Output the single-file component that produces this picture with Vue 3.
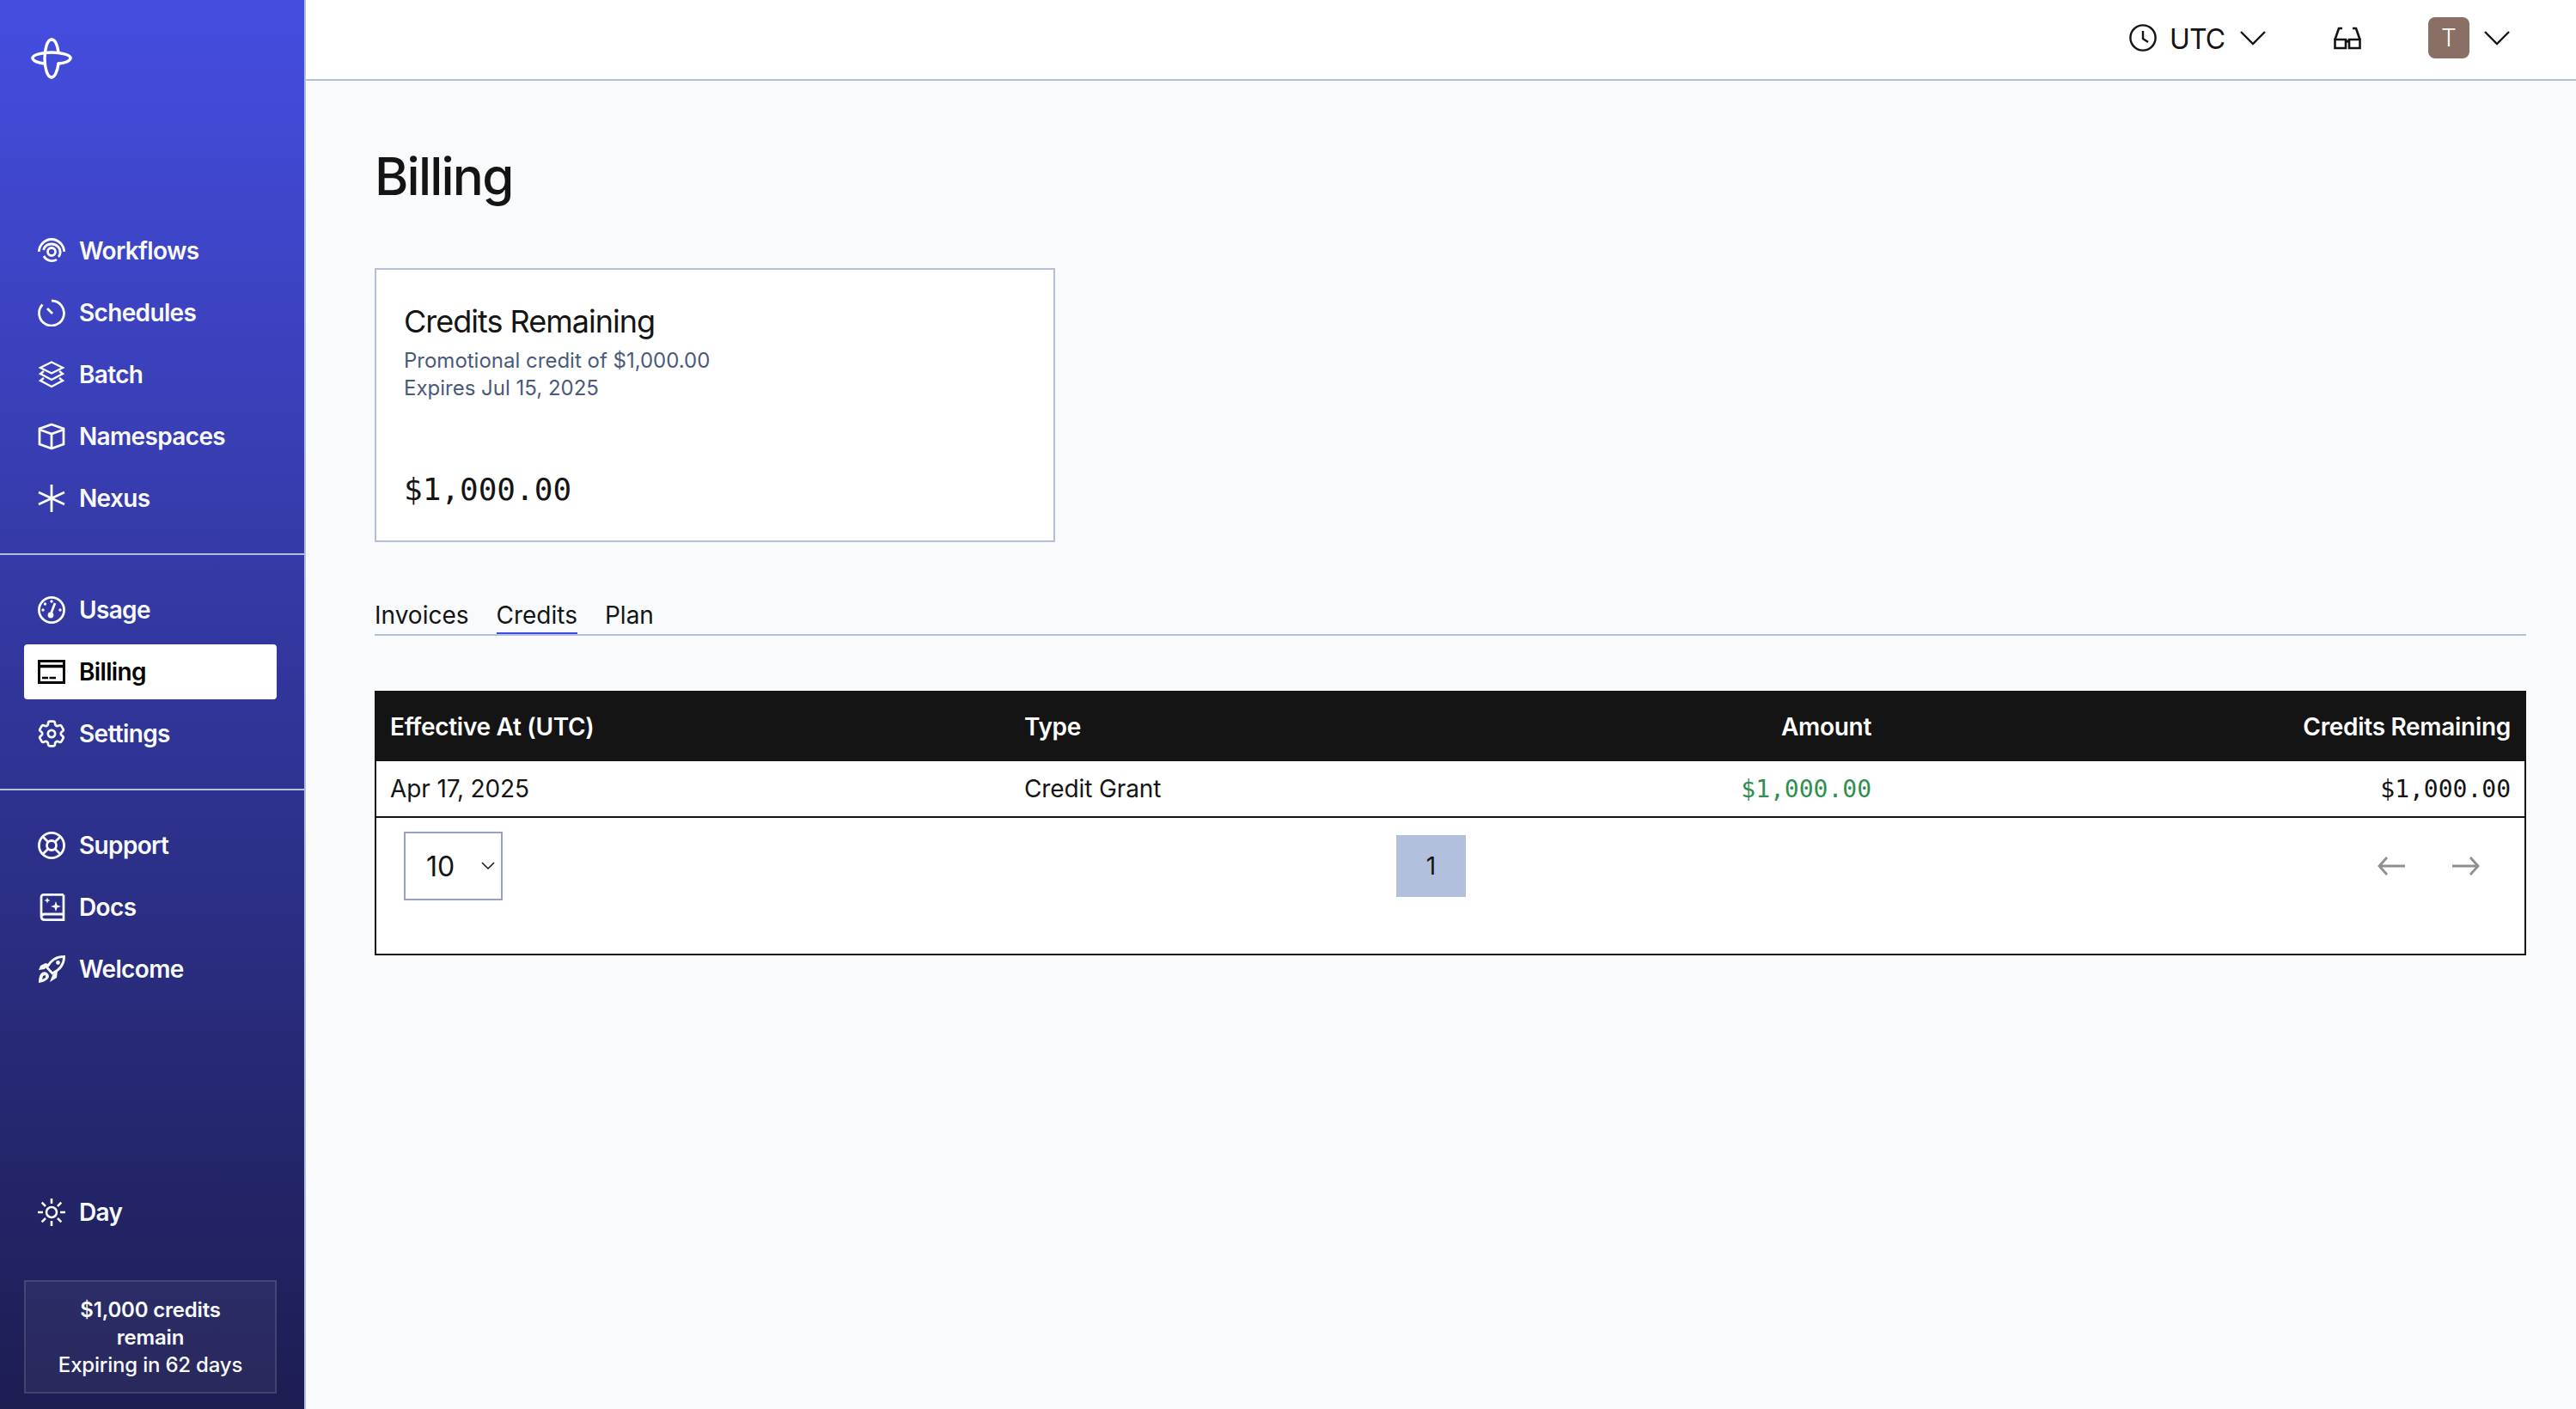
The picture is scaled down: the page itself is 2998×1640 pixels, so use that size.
<script setup>
const topNav = [
  { label: 'Workflows', icon: 'workflows' },
  { label: 'Schedules', icon: 'schedules' },
  { label: 'Batch', icon: 'batch' },
  { label: 'Namespaces', icon: 'namespaces' },
  { label: 'Nexus', icon: 'nexus' },
]
const midNav = [
  { label: 'Usage', icon: 'usage' },
  { label: 'Billing', icon: 'billing', active: true },
  { label: 'Settings', icon: 'settings' },
]
const lowNav = [
  { label: 'Support', icon: 'support' },
  { label: 'Docs', icon: 'docs' },
  { label: 'Welcome', icon: 'welcome' },
]
const groups = [topNav, midNav, lowNav]
const tabs = ['Invoices', 'Credits', 'Plan']
</script>

<template>
  <div class="app">
    <aside class="sidebar">
      <div class="logo">
        <svg width="48" height="48" viewBox="0 0 48 48" fill="none" stroke="#fff" stroke-width="3.4" stroke-linecap="round">
          <path d="M24 2C19 2 16 13 16 24C16 35 19 46 24 46" />
          <path d="M24 2C29 2 31 10 32 17" />
          <path d="M24 46C28 46 31 38 32 30" />
          <path d="M2 23.5C2 20 13 17 24 17C35 17 46 20 46 23.5" />
          <path d="M2 23.5C2 27 9 29.5 16 30" />
          <path d="M46 23.5C46 27 39 30 32 30" />
        </svg>
      </div>
      <nav v-for="(group, gi) in groups" :key="gi" class="group" :class="{ last: gi === 2 }">
        <a v-for="item in group" :key="item.label" class="item" :class="{ active: item.active }">
          <svg class="icon" width="32" height="32" viewBox="0 0 32 32" fill="none" stroke="currentColor" stroke-width="2.8">
            <template v-if="item.icon === 'workflows'">
              <path d="M1.2 17C2 8 9 2.5 16 2.5S30 8 30.8 17" />
              <path d="M6.5 15C8 10 12 8 16 8C22 8 27 13 26 19C25.6 21 25 22 24 23" />
              <path d="M7 22C10 28 18 29 22 26" />
              <circle cx="16" cy="17" r="4.5" />
            </template>
            <template v-else-if="item.icon === 'schedules'">
              <path d="M16 2A14.5 14.5 0 1 1 5.5 6.5" />
              <path d="M11 11L17 17" />
            </template>
            <template v-else-if="item.icon === 'batch'">
              <path d="M16 1.5L29 8L16 14.5L3 8Z" stroke-width="2.4" />
              <path d="M7 12L3 15L16 22L29 15L25 12" stroke-width="2.4" />
              <path d="M7 20L3 23L16 30L29 23L25 20" stroke-width="2.4" />
            </template>
            <template v-else-if="item.icon === 'namespaces'">
              <path d="M16 2L30 7V25L16 30L2 25V7Z" />
              <path d="M2 8L16 13L30 8M16 13V30" />
            </template>
            <template v-else-if="item.icon === 'nexus'">
              <path d="M16 0V32M1 9L31 23M1 23L31 9" />
            </template>
            <template v-else-if="item.icon === 'usage'">
              <circle cx="16" cy="16" r="14.6" />
              <path d="M15 21L20 8" />
              <circle cx="15" cy="22" r="3.4" fill="currentColor" stroke="none" />
              <circle cx="16" cy="6" r="1.7" fill="currentColor" stroke="none" />
              <circle cx="8.5" cy="9" r="1.7" fill="currentColor" stroke="none" />
              <circle cx="6" cy="16" r="1.7" fill="currentColor" stroke="none" />
              <circle cx="26" cy="16" r="1.7" fill="currentColor" stroke="none" />
            </template>
            <template v-else-if="item.icon === 'billing'">
              <rect x="1.5" y="3.5" width="29" height="25" stroke-width="3" />
              <path d="M2 9.5H30" stroke-width="3.5" />
              <path d="M5 23H12M13.5 23H21" stroke-width="2.6" />
            </template>
            <template v-else-if="item.icon === 'settings'">
              <svg x="0" y="0" width="32" height="32" viewBox="2 2 20 20" stroke-width="1.7">
                <path d="M9.594 3.94c.09-.542.56-.94 1.11-.94h2.593c.55 0 1.02.398 1.11.94l.213 1.281c.063.374.313.686.645.87.074.04.147.083.22.127.325.196.72.257 1.075.124l1.217-.456a1.125 1.125 0 0 1 1.37.49l1.296 2.247a1.125 1.125 0 0 1-.26 1.431l-1.003.827c-.293.241-.438.613-.43.992a7.723 7.723 0 0 1 0 .255c-.008.378.137.75.43.991l1.004.827c.424.35.534.955.26 1.43l-1.298 2.247a1.125 1.125 0 0 1-1.369.491l-1.217-.456c-.355-.133-.75-.072-1.076.124a6.47 6.47 0 0 1-.22.128c-.331.183-.581.495-.644.869l-.213 1.281c-.09.543-.56.94-1.11.94h-2.594c-.55 0-1.019-.398-1.11-.94l-.213-1.281c-.062-.374-.312-.686-.644-.87a6.52 6.52 0 0 1-.22-.127c-.325-.196-.72-.257-1.076-.124l-1.217.456a1.125 1.125 0 0 1-1.369-.49l-1.297-2.247a1.125 1.125 0 0 1 .26-1.431l1.004-.827c.292-.24.437-.613.43-.991a6.932 6.932 0 0 1 0-.255c.007-.38-.138-.751-.43-.992l-1.004-.827a1.125 1.125 0 0 1-.26-1.43l1.297-2.247a1.125 1.125 0 0 1 1.37-.491l1.216.456c.356.133.751.072 1.076-.124.072-.044.146-.086.22-.128.332-.183.582-.495.644-.869l.214-1.28Z" />
                <circle cx="12" cy="12" r="2.6" />
              </svg>
            </template>
            <template v-else-if="item.icon === 'support'">
              <circle cx="16" cy="16" r="14.6" />
              <circle cx="16" cy="16" r="5.5" />
              <path d="M5.5 5.5L12 12M26.5 5.5L20 12M5.5 26.5L12 20M26.5 26.5L20 20" />
            </template>
            <template v-else-if="item.icon === 'docs'">
              <path d="M30 1.4H7A3 3 0 0 0 4 4V27A4 4 0 0 0 8 30.6H30V24H8A4 4 0 0 0 4 27M30 1.4V24" />
              <path d="M21 9L22.5 13.5L27 15L22.5 16.5L21 21L19.5 16.5L15 15L19.5 13.5Z" fill="currentColor" stroke="none" />
              <path d="M11 4.5L12 7L14.5 8L12 9L11 11.5L10 9L7.5 8L10 7Z" fill="currentColor" stroke="none" />
            </template>
            <template v-else-if="item.icon === 'welcome'">
              <path d="M30.6 1.4C22 1.4 15 6 10.5 14L17 21C25 17 30.6 10 30.6 1.4Z" />
              <circle cx="23.5" cy="8.5" r="2.4" fill="currentColor" stroke="none" />
              <path d="M9 9L3 12L1 17L8 16L12 10Z" fill="currentColor" stroke="none" />
              <path d="M17 23L23 18L22 26L14 31Z" fill="currentColor" stroke="none" />
              <path fill-rule="evenodd" d="M5 20C9 18 13 21 13 25C12 28 8 31 1 32C1 27 2 22 5 20ZM6 24L5 28L9 26L9 23Z" fill="currentColor" stroke="none" />
            </template>
          </svg>
          <span>{{ item.label }}</span>
        </a>
      </nav>
      <div class="spacer"></div>
      <a class="item day">
        <svg class="icon" width="32" height="32" viewBox="0 0 32 32" fill="none" stroke="currentColor" stroke-width="2.6">
          <circle cx="16" cy="16" r="6" />
          <path d="M16 0V6M16 26V32M0 16H6M26 16H32M4.7 4.7L9 9M23 23L27.3 27.3M4.7 27.3L9 23M23 9L27.3 4.7" />
        </svg>
        <span>Day</span>
      </a>
      <div class="credit">
        <strong>$1,000 credits remain</strong>
        <span>Expiring in 62 days</span>
      </div>
    </aside>

    <div class="right">
      <header class="topbar">
        <svg width="32" height="32" viewBox="0 0 32 32" fill="none" stroke="#141414" stroke-width="2.4">
          <circle cx="16" cy="16" r="14.6" />
          <path d="M16 8V17L22 21" />
        </svg>
        <span class="utc">UTC</span>
        <svg class="chev" width="32" height="32" viewBox="0 0 32 32" fill="none" stroke="#141414" stroke-width="2.4">
          <path d="M2 9L16 23L30 9" />
        </svg>
        <svg class="glasses" width="32" height="32" viewBox="0 0 32 32" fill="none" stroke="#141414" stroke-width="2.6">
          <path d="M1.5 18L6 5H10M30.5 18L26 5H22" />
          <path d="M1.5 18H14V28H1.5ZM18 18H30.5V28H18ZM14 21Q16 19 18 21" />
        </svg>
        <div class="avatar">T</div>
        <svg class="chev2" width="32" height="32" viewBox="0 0 32 32" fill="none" stroke="#141414" stroke-width="2.4">
          <path d="M2 9L16 23L30 9" />
        </svg>
      </header>

      <main class="main">
        <h1>Billing</h1>

        <section class="card">
          <h2>Credits Remaining</h2>
          <p>Promotional credit of $1,000.00</p>
          <p>Expires Jul 15, 2025</p>
          <div class="balance">$1,000.00</div>
        </section>

        <div class="tabs">
          <a v-for="t in tabs" :key="t" class="tab" :class="{ current: t === 'Credits' }">{{ t }}</a>
        </div>

        <section class="table">
          <div class="row head">
            <div>Effective At (UTC)</div>
            <div>Type</div>
            <div class="num">Amount</div>
            <div class="num">Credits Remaining</div>
          </div>
          <div class="row body">
            <div class="txt">Apr 17, 2025</div>
            <div class="type txt">Credit Grant</div>
            <div class="num mono green">$1,000.00</div>
            <div class="num mono end">$1,000.00</div>
          </div>
          <div class="foot">
            <div class="select">
              <span>10</span>
              <svg width="16" height="10" viewBox="0 0 16 10" fill="none" stroke="#141414" stroke-width="1.5">
                <path d="M1 1L8 8L15 1" />
              </svg>
            </div>
            <div class="page">1</div>
            <div class="arrows">
              <svg width="32" height="22" viewBox="0 0 32 22" fill="none" stroke="#8f8f8f" stroke-width="2.8">
                <path d="M11 1L2 11L11 21M2 11H32" />
              </svg>
              <svg width="32" height="22" viewBox="0 0 32 22" fill="none" stroke="#8f8f8f" stroke-width="2.8">
                <path d="M21 1L30 11L21 21M30 11H0" />
              </svg>
            </div>
          </div>
        </section>
      </main>
    </div>
  </div>
</template>

<style scoped>
.app {
  display: flex;
  width: 2998px;
  height: 1640px;
  overflow: hidden;
  font-family: Inter, sans-serif;
  color: #141414;
  background: #f8fafc;
}
.sidebar {
  box-sizing: border-box;
  width: 356px;
  height: 1640px;
  flex: none;
  display: flex;
  flex-direction: column;
  border-right: 2px solid #b3c0dd;
  background: linear-gradient(180deg, #454de0 0%, #1d1d52 100%);
  color: #f8fafc;
}
.logo {
  height: 260px;
  box-sizing: border-box;
  padding: 44px 0 0 36px;
}
.logo svg {
  display: block;
}
.group {
  display: flex;
  flex-direction: column;
  gap: 8px;
  padding: 0 32px 32px 28px;
  border-bottom: 2px solid #b3c0dd;
  margin-bottom: 32px;
}
.group.last {
  border-bottom: 0;
  padding-bottom: 0;
  margin-bottom: 0;
}
.item {
  display: flex;
  align-items: center;
  gap: 16px;
  height: 64px;
  padding-left: 16px;
  border-radius: 4px;
  font-size: 28px;
  font-weight: 600;
  letter-spacing: -0.65px;
}
.item.active {
  background: #fff;
  color: #000;
}
.icon {
  flex: none;
  display: block;
}
.spacer {
  flex: 1;
}
.day {
  margin: 0 32px 47px 28px;
}
.credit {
  box-sizing: border-box;
  margin: 0 32px 18px 28px;
  height: 132px;
  padding: 17px 24px;
  border: 2px solid rgba(255, 255, 255, 0.12);
  background: rgba(255, 255, 255, 0.05);
  text-align: center;
  font-size: 24px;
  line-height: 32px;
  letter-spacing: -0.2px;
}
.credit strong {
  display: block;
  font-weight: 600;
}
.credit span {
  display: block;
  font-weight: 500;
}
.right {
  flex: 1;
  min-width: 0;
  display: flex;
  flex-direction: column;
}
.topbar {
  box-sizing: border-box;
  height: 94px;
  flex: none;
  display: flex;
  align-items: center;
  justify-content: flex-end;
  padding: 0 76px 4px 0;
  background: #fff;
  border-bottom: 2px solid #b3c0dd;
}
.topbar svg {
  display: block;
  flex: none;
}
.utc {
  margin: 4px 17px 0 15px;
  font-size: 32px;
  line-height: 40px;
  letter-spacing: -1px;
}
.glasses {
  margin: 0 78px 0 78px;
}
.avatar {
  width: 48px;
  height: 48px;
  border-radius: 8px;
  background: #8a6f64;
  color: #fff;
  font-size: 28px;
  font-weight: 300;
  display: flex;
  align-items: center;
  justify-content: center;
}
.chev2 {
  margin-left: 16px;
}
.main {
  padding: 71px 58px 0 80px;
}
h1 {
  margin: 0 0 67px;
  font-size: 60px;
  line-height: 80px;
  font-weight: 500;
  letter-spacing: -1.8px;
}
.card {
  box-sizing: border-box;
  width: 792px;
  height: 319px;
  padding: 40px 32px 0;
  background: #fff;
  border: 2px solid #b3c0dd;
}
h2 {
  margin: 0 0 10px;
  font-size: 36px;
  line-height: 40px;
  font-weight: 400;
  letter-spacing: -1px;
}
.card p {
  margin: 0;
  font-size: 24px;
  line-height: 32px;
  color: #4a5a7c;
}
.balance {
  margin-top: 78px;
  font-family: "DejaVu Sans Mono", monospace;
  font-size: 36px;
  line-height: 48px;
}
.tabs {
  display: flex;
  gap: 32px;
  height: 64px;
  margin-top: 43px;
  border-bottom: 2px solid #b3c0dd;
  align-items: flex-end;
}
.tab {
  font-size: 28px;
  line-height: 40px;
  height: 42px;
  box-sizing: border-box;
  border-bottom: 2px solid transparent;
}
.tab.current {
  border-bottom-color: #444ce7;
}
.table {
  margin-top: 64px;
  box-sizing: border-box;
  height: 308px;
  background: #fff;
  border: 2px solid #141414;
  border-top: 0;
  font-size: 28px;
}
.row {
  display: grid;
  grid-template-columns: 736px 511px 511px 742px;
  align-items: center;
}
.row > div {
  padding: 0 18px 0 16px;
}
.row > .type {
  padding-left: 18px;
}
.row > .end {
  padding-right: 16px;
}
.txt {
  letter-spacing: -0.12px;
}
.head {
  height: 82px;
  margin: 0 -2px;
  grid-template-columns: 738px 511px 511px 744px;
  background: #141414;
  color: #fff;
  font-weight: 600;
  letter-spacing: -0.3px;
  padding-top: 2px;
  box-sizing: border-box;
}
.head > div:not(.num) {
  padding-left: 18px;
}
.body {
  height: 64px;
  border-bottom: 2px solid #141414;
}
.num {
  text-align: right;
}
.mono {
  font-family: "DejaVu Sans Mono", monospace;
}
.green {
  color: #2f8f50;
}
.foot {
  display: grid;
  grid-template-columns: 1187px 81px 1fr;
  align-items: start;
  padding-top: 16px;
}
.select {
  box-sizing: border-box;
  margin-left: 32px;
  width: 115px;
  height: 80px;
  padding: 0 7px 0 24px;
  border: 2px solid #94a3c4;
  font-size: 32px;
  display: flex;
  align-items: center;
  justify-content: space-between;
}
.page {
  margin-top: 4px;
  height: 72px;
  background: #b3c0dd;
  display: flex;
  align-items: center;
  justify-content: center;
  font-size: 28px;
}
.arrows {
  margin-top: 29px;
  display: flex;
  justify-content: flex-end;
  gap: 55px;
  padding-right: 52px;
}
.arrows svg {
  display: block;
}
</style>
